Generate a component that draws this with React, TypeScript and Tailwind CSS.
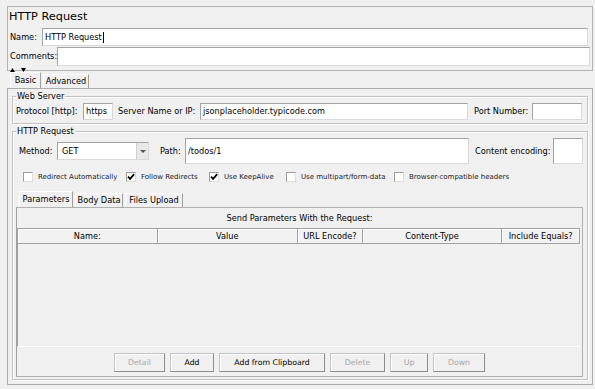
import React from "react";

const field =
  "bg-white border border-[#a3a3a3] border-b-[#d9d9d9] border-r-[#d9d9d9] flex items-center pl-[2px] overflow-hidden whitespace-nowrap";
const groupBox = "relative border border-[#c2c2c2] shadow-[inset_1px_1px_0_#ffffff,1px_1px_0_#ffffff]";

function Legend({ children }: { children: React.ReactNode }) {
  return (
    <span className="absolute -top-[6px] left-[3px] bg-[#f0f0f0] px-px leading-[10px]">
      {children}
    </span>
  );
}

function CheckBox({ checked, label, w }: { checked?: boolean; label: string; w: string }) {
  return (
    <div className={`flex items-center ${w}`}>
      <span className="w-[10px] h-[10px] bg-white border border-[#9c9c9c] border-b-[#dcdcdc] border-r-[#dcdcdc] flex items-center justify-center">
        {checked && (
          <svg width="8" height="8" viewBox="0 0 8 8">
            <path d="M1 3.6L3.1 5.8L7.2 1.2" stroke="#000" strokeWidth="1.8" fill="none" />
          </svg>
        )}
      </span>
      <span className="ml-[5px] text-[7px] text-[#1a1a1a] whitespace-nowrap">{label}</span>
    </div>
  );
}

function Btn({ label, w, disabled }: { label: string; w: string; disabled?: boolean }) {
  return (
    <div
      className={`${w} h-[19px] flex items-center justify-center border border-[#c4c4c4] border-b-[#8c8c8c] border-r-[#8c8c8c] shadow-[inset_1px_1px_0_#ffffff] text-[7.8px] ${
        disabled ? "text-[#a6a6a6]" : "text-black"
      }`}
    >
      {label}
    </div>
  );
}

function Tab({ label, w, active }: { label: string; w: string; active?: boolean }) {
  return (
    <div
      className={`${w} ${
        active ? "h-[16px]" : "h-[14px]"
      } flex items-center justify-center border-t border-l border-white border-r border-r-[#a0a0a0]`}
    >
      {label}
    </div>
  );
}

const headers: [string, string][] = [
  ["Name:", "w-[140px]"],
  ["Value", "w-[141px]"],
  ["URL Encode?", "w-[65px]"],
  ["Content-Type", "w-[140px]"],
  ["Include Equals?", "w-[77px]"],
];

export default function App() {
  return (
    <div className="w-[595px] h-[389px] overflow-hidden bg-[#f0f0f0] pt-[6px] font-['DejaVu_Sans',sans-serif] text-[8.2px] text-black">
      {/* top panel */}
      <div className="relative ml-[7px] w-[586px] h-[65px] border border-[#b2b2b2]">
        <div className="h-[21px] pl-px pt-[3px] text-[11.3px] leading-[14px]">HTTP Request</div>
        <div className="h-[18px] flex items-center">
          <span className="w-[34px] pl-[2px]">Name:</span>
          <div className={`w-[546px] h-[18px] ${field}`}>
            HTTP Request
            <span className="ml-px w-px h-[11px] bg-black" />
          </div>
        </div>
        <div className="h-[19px] mt-px flex items-center">
          <span className="w-[49px] pl-[2px]">Comments:</span>
          <div className={`w-[533px] h-[19px] ${field}`} />
        </div>
        <div className="absolute -bottom-[2px] left-[2px] flex gap-[6px]">
          <svg width="5" height="4" viewBox="0 0 5 4">
            <path d="M0 4L2.5 0L5 4Z" fill="#000" />
          </svg>
          <svg width="5" height="4" viewBox="0 0 5 4">
            <path d="M0 0L2.5 4L5 0Z" fill="#000" />
          </svg>
        </div>
      </div>

      {/* main tabs */}
      <div className="h-[17px] pl-[10px] flex items-end gap-[2px]">
        <Tab label="Basic" w="w-[31px]" active />
        <Tab label="Advanced" w="w-[46px]" />
      </div>

      <div className="ml-[7px] w-[586px] h-[297px] border border-[#acacac] pt-[7px]">
        {/* Web Server */}
        <div className={`${groupBox} ml-[4px] w-[576px] h-[28px] pt-[5px]`}>
          <Legend>Web Server</Legend>
          <div className="h-[18px] flex items-center pl-[3px]">
            <span className="w-[67px]">Protocol [http]:</span>
            <div className={`w-[30px] h-[17px] ${field}`}>https</div>
            <span className="ml-[5px] w-[82px]">Server Name or IP:</span>
            <div className={`w-[268px] h-[17px] ${field}`}>jsonplaceholder.typicode.com</div>
            <span className="ml-[6px] w-[58px]">Port Number:</span>
            <div className={`w-[50px] h-[17px] ${field}`} />
          </div>
        </div>

        {/* HTTP Request */}
        <div className={`${groupBox} mt-[7px] ml-[4px] w-[576px] h-[249px] pt-[6px]`}>
          <Legend>HTTP Request</Legend>
          <div className="h-[26px] flex items-center pl-[6px]">
            <span className="w-[38px]">Method:</span>
            <div className={`w-[92px] h-[18px] ${field} pr-0 justify-between`}>
              <span className="pl-[2px]">GET</span>
              <span className="w-[12px] h-full bg-[#e8e8e8] border-l border-[#d0d0d0] flex items-center justify-center">
                <svg width="6" height="3" viewBox="0 0 6 3">
                  <path d="M0 0L3 3L6 0Z" fill="#555" />
                </svg>
              </span>
            </div>
            <span className="ml-[11px] w-[25px]">Path:</span>
            <div className={`w-[284px] h-[26px] ${field}`}>/todos/1</div>
            <span className="ml-[6px] w-[78px]">Content encoding:</span>
            <div className={`w-[30px] h-[26px] ${field}`} />
          </div>

          <div className="mt-[6px] h-[14px] flex items-center pl-[10px]">
            <CheckBox label="Redirect Automatically" w="w-[103px]" />
            <CheckBox label="Follow Redirects" w="w-[83px]" checked />
            <CheckBox label="Use KeepAlive" w="w-[77px]" checked />
            <CheckBox label="Use multipart/form-data" w="w-[108px]" />
            <CheckBox label="Browser-compatible headers" w="w-[130px]" />
          </div>

          {/* sub tabs */}
          <div className="mt-[6px] h-[17px] pl-[6px] flex items-end gap-[2px]">
            <Tab label="Parameters" w="w-[54px]" active />
            <Tab label="Body Data" w="w-[48px]" />
            <Tab label="Files Upload" w="w-[58px]" />
          </div>

          <div className="ml-[3px] w-[567px] h-[170px] border border-[#b0b0b0] border-l-[#a0a0a0]">
            <div className="h-[20px] flex items-center justify-center">Send Parameters With the Request:</div>
            <div className="w-[563px] h-[16px] flex border border-[#a0a0a0]">
              {headers.map(([h, w], i) => (
                <div
                  key={h}
                  className={`${w} h-full flex items-center justify-center bg-[#f2f2f2] shadow-[inset_1px_1px_0_#ffffff] ${
                    i < headers.length - 1 ? "border-r border-[#a0a0a0]" : ""
                  }`}
                >
                  {h}
                </div>
              ))}
            </div>
            <div className="w-[563px] h-[103px] border-l border-[#a0a0a0] border-b border-b-white" />
            <div className="mt-[6px] flex justify-center gap-[5px]">
              <Btn label="Detail" w="w-[51px]" disabled />
              <Btn label="Add" w="w-[44px]" />
              <Btn label="Add from Clipboard" w="w-[106px]" />
              <Btn label="Delete" w="w-[55px]" disabled />
              <Btn label="Up" w="w-[38px]" disabled />
              <Btn label="Down" w="w-[52px]" disabled />
            </div>
          </div>
        </div>
      </div>
    </div>
  );
}
